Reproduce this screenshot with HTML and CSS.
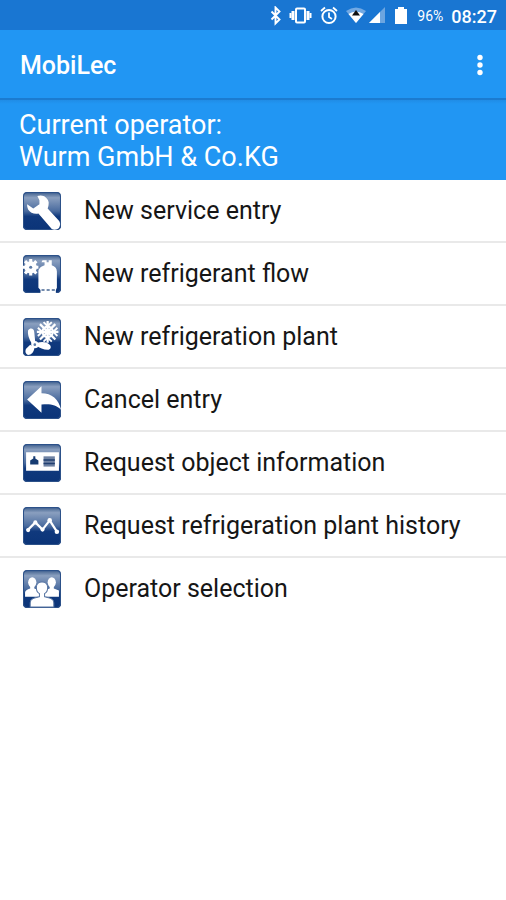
FILE: index.html
```html
<!DOCTYPE html>
<html lang="en">
<head>
<meta charset="utf-8">
<meta name="viewport" content="width=device-width, initial-scale=1">
<title>MobiLec</title>
<link rel="stylesheet" href="styles.css">
</head>
<body>
<svg class="defs" width="0" height="0" aria-hidden="true">
  <defs>
    <linearGradient id="tile" x1="0" y1="0" x2="0" y2="1">
      <stop offset="0" stop-color="#2c5189"/>
      <stop offset=".06" stop-color="#5b779f"/>
      <stop offset=".15" stop-color="#8a9fbf"/>
      <stop offset=".5" stop-color="#4a6b9e"/>
      <stop offset=".64" stop-color="#10397d"/>
      <stop offset="1" stop-color="#0b3478"/>
    </linearGradient>
    <clipPath id="round"><rect width="37" height="37" rx="4"/></clipPath>
    <g id="base">
      <rect width="37" height="37" rx="4" fill="url(#tile)"/>
      <rect x=".5" y=".5" width="36" height="36" rx="4" fill="none" stroke="#2c5189"/>
    </g>
  </defs>
</svg>
<div class="status">
  <svg class="signals" viewBox="0 0 142 20" aria-hidden="true">
    <path d="M1.500 5.500l8 8-4 4V1.500l4 4-8 8" fill="none" stroke="#fff" stroke-width="1.900"/>
    <rect x="26" y="2.500" width="9" height="14" rx="1" fill="none" stroke="#fff" stroke-width="2"/>
    <path d="M23 5v9M38 5v9" stroke="#fff" stroke-width="3"/>
    <path d="M20.500 7v5M40.500 7v5" stroke="#fff" stroke-width="2"/>
    <circle cx="59" cy="10.500" r="6.600" fill="none" stroke="#fff" stroke-width="2"/>
    <path d="M59 6.500v4.500l3 2M51 5l4-3.500M67 5l-4-3.500" fill="none" stroke="#fff" stroke-width="1.800"/>
    <path d="M76 5q10-7 20 0L86 17z" fill="#72a9e3"/>
    <path d="M78.500 8q7.500-4.500 15 0L86 17z" fill="#fff"/>
    <path d="M86 4l4 5.500h-8z" fill="#111"/>
    <path d="M115 1v16H99z" fill="#6ca5e0"/><path d="M110 6v11H99z" fill="#fff"/>
    <path d="M128 1h6v2h3v15h-12V3h3z" fill="#fff"/>
  </svg>
  <span class="charge">96%</span>
  <time class="clock">08:27</time>
</div>
<header class="bar">
  <h1>MobiLec</h1>
  <button class="more" type="button" aria-label="More options">
    <svg width="6" height="22" viewBox="0 0 6 22" fill="#fff" aria-hidden="true"><circle cx="3" cy="3.500" r="2.700"/><circle cx="3" cy="11" r="2.700"/><circle cx="3" cy="18.500" r="2.700"/></svg>
  </button>
</header>
<section class="operator">
  <p>Current operator:</p>
  <p>Wurm GmbH &amp; Co.KG</p>
</section>
<main>
  <ul class="menu">
    <li><a href="#service">
      <svg class="icon" viewBox="0 0 37 37" aria-hidden="true"><use href="#base"/><path clip-path="url(#round)" d="M14 4c5-2 10 1 11 6 0 2 0 4-1 6l11 12c2 3 1 5 0 7-2 2-5 2-7 1L15 21c-4 1-8-1-10-4-1-2-1-4-1-5l6 4 6-4V8z" fill="#fff"/></svg>
      <span>New service entry</span></a></li>
    <li><a href="#flow">
      <svg class="icon" viewBox="0 0 37 37" aria-hidden="true"><use href="#base"/><g clip-path="url(#round)"><path d="M7.500 4v16M0 12h15M2 6l11 12M13 6L2 18" stroke="#fff" stroke-width="3"/><circle cx="7.500" cy="12" r="4.500" fill="none" stroke="#fff" stroke-width="3"/><circle cx="7.500" cy="12" r="1.500" fill="#5b7aa6"/><path d="M21 10V7h-3l1-2h4v2h2V5h3v5c3 1 5 3 5 6v16l-1 2v3H17v-3l-2-2V16c0-3 3-5 6-6z" fill="#fff"/><path d="M18 33h3v2h-3zM23 33h3v2h-3zM28 33h3v2h-3z" fill="#738bad"/></g></svg>
      <span>New refrigerant flow</span></a></li>
    <li><a href="#plant">
      <svg class="icon" viewBox="0 0 37 37" aria-hidden="true"><use href="#base"/><g fill="none" stroke="#fff" stroke-width="2.200"><path d="M24 3v21M13.500 13.500h21M16.500 6l15 15M31.500 6l-15 15"/><circle cx="24" cy="13.500" r="5"/><path d="M20 4l4 4 4-4M20 23l4-4 4 4M14.500 9.500l4 4-4 4M33.500 9.500l-4 4 4 4" stroke-width="1.800"/></g><g fill="#fff"><path d="M5 12c2-3 6-2 6 2l1 10-3 2c-2-4-5-9-4-14zM14 24c4-1 9-1 12 2 2 2 1 5-2 5-4 0-8-2-11-4zM7 26l4 3c0 4-3 7-6 7-3-1-3-4-2-6z"/><circle cx="11.500" cy="26" r="3.500"/></g><circle cx="11.500" cy="26" r="1.300" fill="#597aa7"/></svg>
      <span>New refrigeration plant</span></a></li>
    <li><a href="#cancel">
      <svg class="icon" viewBox="0 0 37 37" aria-hidden="true"><use href="#base"/><path clip-path="url(#round)" d="M4 18L18 5v7c10 0 17 6 19 16-5-5-11-6-19-5v8z" fill="#fff"/></svg>
      <span>Cancel entry</span></a></li>
    <li><a href="#object">
      <svg class="icon" viewBox="0 0 37 37" aria-hidden="true"><use href="#base"/><path d="M3 8h32v18H3z" fill="#fff"/><path d="M7 16l3-2v-2h2v2l3 2v4H7z" fill="#163b72"/><path d="M20 12h11v10H20z" fill="#6e82a3"/><path d="M20 15.500h11M20 19h11" stroke="#213f70" stroke-width="1.500"/></svg>
      <span>Request object information</span></a></li>
    <li><a href="#history">
      <svg class="icon" viewBox="0 0 37 37" aria-hidden="true"><use href="#base"/><path d="M4 23l8-8 7 7 7-9 7 11" fill="none" stroke="#fff" stroke-width="2.200"/><g fill="#fff"><circle cx="5" cy="22.500" r="2"/><circle cx="12" cy="15" r="2"/><circle cx="19" cy="22" r="2"/><circle cx="26" cy="13" r="2.200"/><circle cx="33" cy="24" r="2.200"/></g></svg>
      <span>Request refrigeration plant history</span></a></li>
    <li><a href="#operators">
      <svg class="icon" viewBox="0 0 37 37" aria-hidden="true"><use href="#base"/><g clip-path="url(#round)" fill="#fff"><g id="side"><ellipse cx="9" cy="12" rx="4" ry="5"/><path d="M7 14h4v4l5 2v6H2v-4c0-2 2-3 5-4z"/></g><use href="#side" x="19"/><path d="M13 17c0-7 11-7 11 0 0 3-1 5-3 6v3c5 1 9 2 9 6v4H7v-4c0-4 4-5 9-6v-3c-2-1-3-3-3-6z" stroke="#5976a3"/></g></svg>
      <span>Operator selection</span></a></li>
  </ul>
</main>
</body>
</html>
```
FILE: styles.css
```css
* { box-sizing: border-box; }

body {
  margin: 0;
  background: #fff;
  color: #161616;
  font-family: Roboto, "Liberation Sans", sans-serif;
}

h1, p, ul { margin: 0; padding: 0; }

.defs { position: absolute; }

.status {
  display: flex;
  justify-content: flex-end;
  align-items: center;
  height: 30px;
  padding: 2px 9px 0 0;
  background: #1976d2;
  color: #fff;
}

.signals { width: 142px; height: 20px; margin-right: 5px; }

.charge { margin-right: 8px; font-size: 14px; }

.clock { font-size: 18px; font-weight: 500; }

.bar {
  display: flex;
  justify-content: space-between;
  align-items: center;
  height: 70px;
  padding: 2px 15px 0 20px;
  border-bottom: 2px solid #1b7bd0;
  background: #2196f3;
  color: #fff;
}

.bar h1 { font-size: 25px; font-weight: 500; }

.more {
  display: flex;
  padding: 8px;
  border: 0;
  background: none;
}

.operator {
  min-height: 80px;
  padding: 9px 19px 7px;
  background: linear-gradient(#208ce6, #2196f3 4px);
  color: #fff;
  font-size: 27px;
  line-height: 32px;
}

.menu { list-style: none; }

.menu li { border-bottom: 2px solid #e9e9e9; }

.menu li:last-child { border-bottom: 0; }

.menu a {
  display: flex;
  align-items: center;
  gap: 23px;
  min-height: 61px;
  padding: 0 23px;
  color: inherit;
  font-size: 25px;
  text-decoration: none;
}

.icon { flex: none; width: 38px; height: 38px; }
```
